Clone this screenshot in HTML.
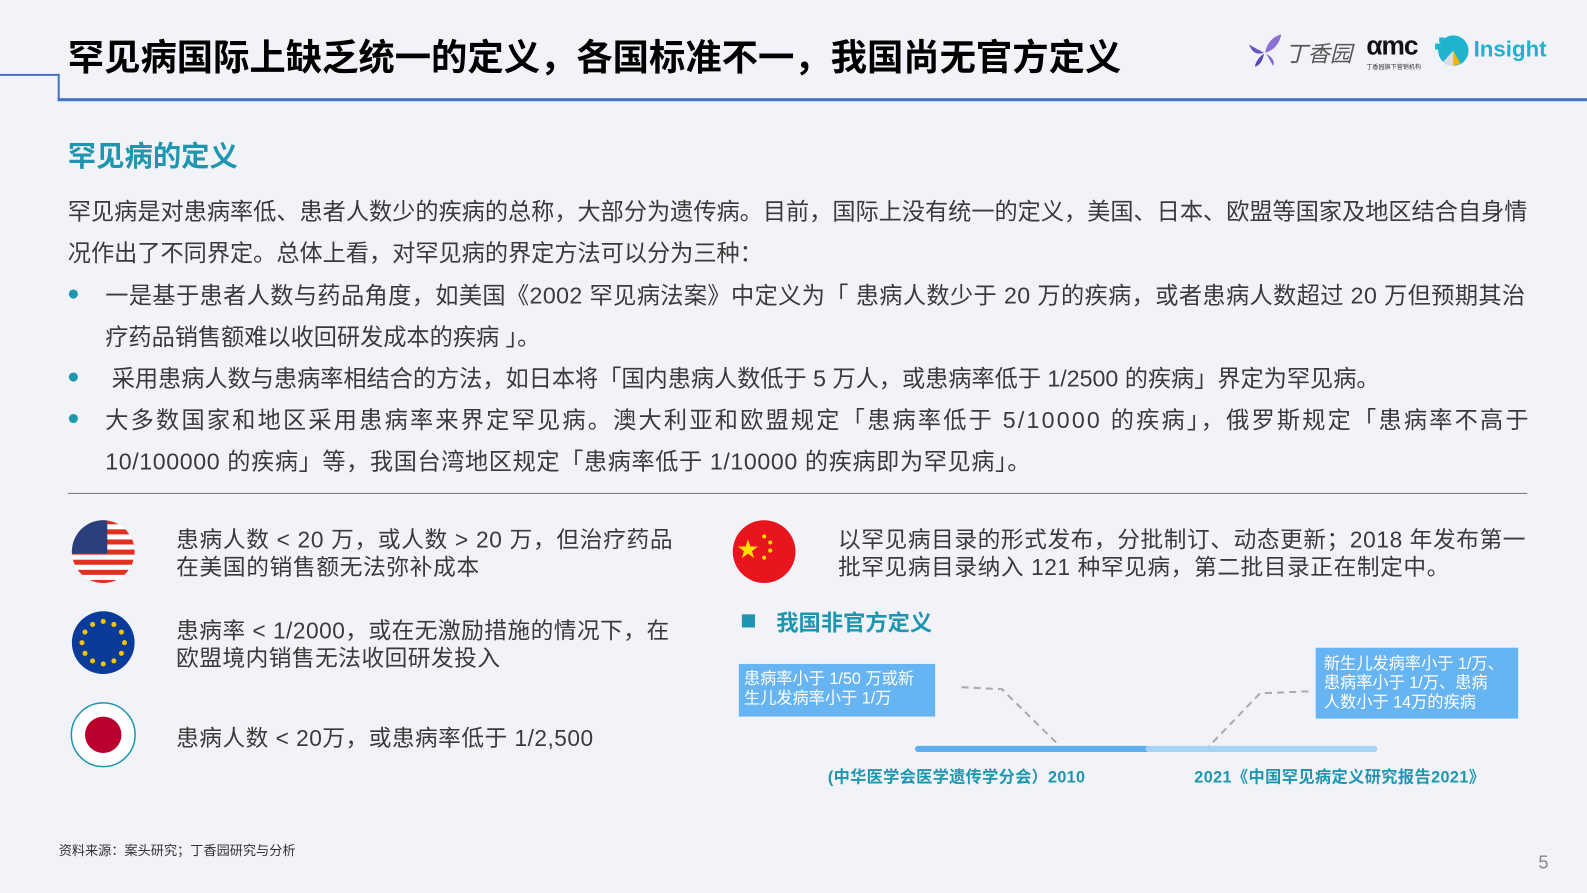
<!DOCTYPE html>
<html><head><meta charset="utf-8"><style>
*{margin:0;padding:0;box-sizing:border-box}
body{width:1587px;height:892px;background:#f2f3f8;position:relative;overflow:hidden;font-family:"Liberation Sans","Noto Sans CJK SC",sans-serif;color:#333}
#w{position:absolute;left:0;top:0;width:1568px;height:882px;transform:scale(1.0121);transform-origin:0 0}
.a{position:absolute;white-space:nowrap}
.t{font-size:22.9px;color:#3a3a3a}
.b{position:absolute;left:68px;width:9px;height:9px;border-radius:50%;background:#1e96b0}
</style></head><body><div id="w">
<div class="a" style="left:0;top:73px;width:59px;height:2px;background:#4472c4"></div>
<div class="a" style="left:57px;top:73px;width:2px;height:27px;background:#4472c4"></div>
<div class="a" style="left:57px;top:97px;width:1511px;height:3px;background:#4472c4"></div>
<div class="a" style="left:67px;top:28px;font-size:35.9px;font-weight:bold;color:#000">罕见病国际上缺乏统一的定义，各国标准不一，我国尚无官方定义</div>
<svg class="a" style="left:1232px;top:32px" width="36" height="36" viewBox="0 0 36 36"><path d="M18 20 C20 10 26 4 34 2 C32 12 26 18 18 20Z" fill="#8b6fd8"/><path d="M17 20 C12 18 6 14 2 12 C6 22 12 22 17 20Z" fill="#6a55c0"/><path d="M17 21 C12 24 8 30 8 34 C14 32 16 26 17 21Z" fill="#5a48b0"/><path d="M19 21 C22 26 24 30 26 33 C28 28 24 24 19 21Z" fill="#7d64d0"/></svg>
<div class="a" style="left:1270px;top:36px;font-size:22px;color:#555;font-style:italic">丁香园</div>
<div class="a" style="left:1350px;top:30px;font-size:26px;font-weight:bold;color:#111;letter-spacing:-1px">&#945;mc</div>
<div class="a" style="left:1350px;top:61px;font-size:6px;color:#333">丁香园旗下营销机构</div>
<svg class="a" style="left:1416px;top:33px" width="36" height="36" viewBox="0 0 36 36"><circle cx="20" cy="17" r="15" fill="#1fb3cf"/><path d="M20 17 L10 28 A15 15 0 0 0 20 32Z" fill="#ddd"/><path d="M20 17 L20 32 L27 30Z" fill="#f4b400"/><rect x="2" y="10" width="6" height="6" fill="#1fb3cf"/><rect x="6" y="4" width="5" height="5" fill="#1fb3cf"/></svg>
<div class="a" style="left:1456px;top:36px;font-size:22px;font-weight:bold;color:#1fb3cf">Insight</div>

<div class="a" style="left:67px;top:133px;font-size:28px;font-weight:bold;color:#1e96b0">罕见病的定义</div>
<div class="a t" style="left:67px;top:190px">罕见病是对患病率低、患者人数少的疾病的总称，大部分为遗传病。目前，国际上没有统一的定义，美国、日本、欧盟等国家及地区结合自身情</div>
<div class="a t" style="left:67px;top:231px">况作出了不同界定。总体上看，对罕见病的界定方法可以分为三种：</div>
<div class="b" style="top:286px"></div>
<div class="a t" style="left:104px;top:273px;letter-spacing:0.4px">一是基于患者人数与药品角度，如美国《2002 罕见病法案》中定义为「 患病人数少于 20 万的疾病，或者患病人数超过 20 万但预期其治</div>
<div class="a t" style="left:104px;top:314px">疗药品销售额难以收回研发成本的疾病 」。</div>
<div class="b" style="top:368px"></div>
<div class="a t" style="left:104px;top:355px">&nbsp;采用患病人数与患病率相结合的方法，如日本将「国内患病人数低于 5 万人，或患病率低于 1/2500 的疾病」界定为罕见病。</div>
<div class="b" style="top:409px"></div>
<div class="a t" style="left:104px;top:396px;letter-spacing:2.2px">大多数国家和地区采用患病率来界定罕见病。澳大利亚和欧盟规定「患病率低于 5/10000 的疾病」，俄罗斯规定「患病率不高于</div>
<div class="a t" style="left:104px;top:437px;letter-spacing:0.6px">10/100000 的疾病」等，我国台湾地区规定「患病率低于 1/10000 的疾病即为罕见病」。</div>
<div class="a" style="left:67px;top:487px;width:1442px;height:1px;background:#777"></div>

<svg class="a" style="left:70px;top:513px" width="64" height="64" viewBox="0 0 64 64"><defs><clipPath id="c1"><circle cx="32" cy="32" r="31"/></clipPath></defs><g clip-path="url(#c1)"><rect width="64" height="64" fill="#fff"/><g fill="#e0301e"><rect y="0" width="64" height="5"/><rect y="10" width="64" height="5"/><rect y="20" width="64" height="5"/><rect y="30" width="64" height="5"/><rect y="40" width="64" height="5"/><rect y="50" width="64" height="5"/><rect y="60" width="64" height="5"/></g><rect width="36" height="34" fill="#2a3f7c"/></g></svg>
<svg class="a" style="left:70px;top:603px" width="64" height="64" viewBox="0 0 64 64"><circle cx="32" cy="32" r="31" fill="#0a3a9a"/><g fill="#f5c400"><circle cx="32" cy="11" r="2.5"/><circle cx="42.5" cy="14" r="2.5"/><circle cx="50" cy="21.5" r="2.5"/><circle cx="53" cy="32" r="2.5"/><circle cx="50" cy="42.5" r="2.5"/><circle cx="42.5" cy="50" r="2.5"/><circle cx="32" cy="53" r="2.5"/><circle cx="21.5" cy="50" r="2.5"/><circle cx="14" cy="42.5" r="2.5"/><circle cx="11" cy="32" r="2.5"/><circle cx="14" cy="21.5" r="2.5"/><circle cx="21.5" cy="14" r="2.5"/></g></svg>
<svg class="a" style="left:69px;top:693px" width="66" height="66" viewBox="0 0 66 66"><circle cx="33" cy="33" r="31.5" fill="#fff" stroke="#1e96b0" stroke-width="1.5"/><circle cx="33" cy="33" r="18" fill="#bc002d"/></svg>
<svg class="a" style="left:723px;top:513px" width="64" height="64" viewBox="0 0 64 64"><circle cx="32" cy="32" r="31" fill="#e8141e"/><polygon points="16,20 18.5,27 26,27 20,31.5 22,38.5 16,34 10,38.5 12,31.5 6,27 13.5,27" fill="#ffde00"/><g fill="#ffde00"><circle cx="32" cy="17" r="2"/><circle cx="38" cy="23" r="2"/><circle cx="38" cy="31" r="2"/><circle cx="32" cy="38" r="2"/></g></svg>

<div class="a t" style="left:174px;top:520px;line-height:27px;font-size:22.4px;letter-spacing:0.7px">患病人数 &lt; 20 万，或人数 &gt; 20 万，但治疗药品<br>在美国的销售额无法弥补成本</div>
<div class="a t" style="left:174px;top:610px;line-height:27px;font-size:22.4px;letter-spacing:0.5px">患病率 &lt; 1/2000，或在无激励措施的情况下，在<br>欧盟境内销售无法收回研发投入</div>
<div class="a t" style="left:174px;top:712px;font-size:22.4px;letter-spacing:0.5px">患病人数 &lt; 20万，或患病率低于 1/2,500</div>
<div class="a t" style="left:828px;top:520px;line-height:27px;font-size:22.4px;letter-spacing:0.6px">以罕见病目录的形式发布，分批制订、动态更新；2018 年发布第一<br>批罕见病目录纳入 121 种罕见病，第二批目录正在制定中。</div>

<div class="a" style="left:733px;top:607px;width:13px;height:13px;background:#1e96b0"></div>
<div class="a" style="left:767px;top:598px;font-size:22px;font-weight:bold;color:#1e96b0">我国非官方定义</div>

<div class="a" style="left:730px;top:656px;width:194px;height:52px;background:#67b4f2;color:#fff;font-size:16px;line-height:19px;padding:6px 5px">患病率小于 1/50 万或新<br>生儿发病率小于 1/万</div>
<div class="a" style="left:1300px;top:640px;width:200px;height:70px;background:#67b4f2;color:#fff;font-size:16px;line-height:19px;padding:7px 8px">新生儿发病率小于 1/万、<br>患病率小于 1/万、患病<br>人数小于 14万的疾病</div>
<svg class="a" style="left:900px;top:670px" width="470" height="80" viewBox="0 0 470 80"><polyline points="50,9 90,11 150,70" fill="none" stroke="#aaa" stroke-width="2" stroke-dasharray="7,5"/><polyline points="290,72 345,15 395,13" fill="none" stroke="#aaa" stroke-width="2" stroke-dasharray="7,5"/><line x1="7" y1="70" x2="235" y2="70" stroke="#5eb0ef" stroke-width="6" stroke-linecap="round"/><line x1="235" y1="70" x2="458" y2="70" stroke="#a8d3f7" stroke-width="6" stroke-linecap="round"/></svg>
<div class="a" style="left:818px;top:754px;font-size:16px;font-weight:bold;color:#1e96b0;letter-spacing:0.3px">(中华医学会医学遗传学分会）2010</div>
<div class="a" style="left:1180px;top:754px;font-size:16px;font-weight:bold;color:#1e96b0;letter-spacing:0.4px">2021《中国罕见病定义研究报告2021》</div>

<div class="a" style="left:58px;top:830px;font-size:13px;color:#333">资料来源：案头研究；丁香园研究与分析</div>
<div class="a" style="left:1520px;top:842px;font-size:18px;color:#888">5</div>
</div></body></html>
